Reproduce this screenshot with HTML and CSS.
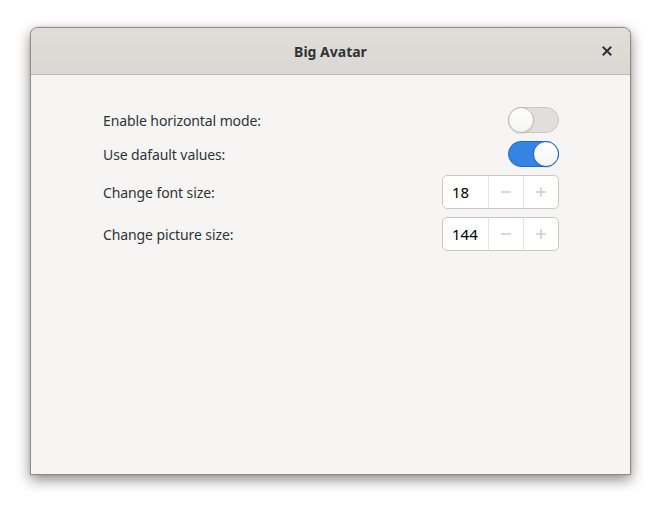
FILE: index.html
```html
<!DOCTYPE html>
<html>
<head>
<meta charset="utf-8">
<link rel="stylesheet" href="styles.css">
</head>
<body>
<div class="window">
  <header class="headerbar">
    <span class="title">Big Avatar</span>
    <button class="close" aria-label="Close">
      <svg width="16" height="16" viewBox="0 0 16 16"><path d="M4.5 4.5 L11.5 11.5 M11.5 4.5 L4.5 11.5" stroke="#2e3436" stroke-width="2" stroke-linecap="square" fill="none"/></svg>
    </button>
  </header>
  <main class="content">
    <div class="grid">
      <div class="label">Enable horizontal mode:</div>
      <div class="ctrl"><div class="switch"><div class="knob"></div></div></div>
      <div class="label">Use dafault values:</div>
      <div class="ctrl"><div class="switch on"><div class="knob"></div></div></div>
      <div class="label">Change font size:</div>
      <div class="ctrl">
        <div class="spin">
          <div class="value">18</div>
          <div class="btn"><svg width="12" height="12" viewBox="0 0 12 12"><path d="M1 6 H11" stroke="currentColor" stroke-width="1.5"/></svg></div>
          <div class="btn"><svg width="12" height="12" viewBox="0 0 12 12"><path d="M1 6 H11 M6 1 V11" stroke="currentColor" stroke-width="1.5"/></svg></div>
        </div>
      </div>
      <div class="label">Change picture size:</div>
      <div class="ctrl">
        <div class="spin">
          <div class="value">144</div>
          <div class="btn"><svg width="12" height="12" viewBox="0 0 12 12"><path d="M1 6 H11" stroke="currentColor" stroke-width="1.5"/></svg></div>
          <div class="btn"><svg width="12" height="12" viewBox="0 0 12 12"><path d="M1 6 H11 M6 1 V11" stroke="currentColor" stroke-width="1.5"/></svg></div>
        </div>
      </div>
    </div>
  </main>
</div>
</body>
</html>
```
FILE: styles.css
```css
html, body {
  margin: 0;
  padding: 0;
  background: #ffffff;
}
body {
  font-family: "Noto Sans", "DejaVu Sans", sans-serif;
  font-size: 14px;
  color: #2e3436;
  padding: 27px 0 0 30px;
  width: 666px;
  height: 513px;
  box-sizing: border-box;
  overflow: hidden;
}
.window {
  width: 601px;
  height: 448px;
  box-sizing: border-box;
  border: 1px solid #8e8d8b;
  border-radius: 8px 8px 0 0;
  background: #f6f5f4;
  box-shadow: 0 5px 14px rgba(0,0,0,0.45), 0 0 2px rgba(0,0,0,0.2);
  display: flex;
  flex-direction: column;
  overflow: hidden;
}
.headerbar {
  height: 46px;
  flex: none;
  background: linear-gradient(#e1deda, #dbd8d4);
  border-bottom: 1px solid #bfb8b1;
  display: flex;
  align-items: center;
  justify-content: center;
  position: relative;
}
.title {
  font-weight: bold;
  font-size: 14px;
  color: #2e3436;
}
.close {
  position: absolute;
  right: 15px;
  top: 15px;
  width: 16px;
  height: 16px;
  padding: 0;
  border: 0;
  background: none;
  display: flex;
}
.content {
  flex: 1;
  padding: 32px 71px 0 72px;
}
.grid {
  display: grid;
  grid-template-columns: 1fr auto;
  row-gap: 8px;
  align-items: center;
  letter-spacing: -0.1px;
}
.label {
  color: #2e3436;
}
.ctrl {
  display: flex;
  justify-content: flex-end;
}
.switch {
  width: 51px;
  height: 26px;
  box-sizing: border-box;
  border-radius: 13px;
  border: 1px solid #cdc7c2;
  background: #e1dedb;
  position: relative;
}
.switch .knob {
  position: absolute;
  left: -1px;
  top: -1px;
  width: 26px;
  height: 26px;
  box-sizing: border-box;
  border-radius: 50%;
  background: linear-gradient(#ffffff, #f6f5f4);
  border: 1px solid #bfb8b1;
  box-shadow: 0 1px 1px rgba(0,0,0,0.1);
}
.switch.on {
  background: #3584e4;
  border-color: #1b6acb;
}
.switch.on .knob {
  left: auto;
  right: -1px;
  border-color: #1b6acb;
}
.spin {
  display: flex;
  height: 34px;
  box-sizing: border-box;
  border: 1px solid #cdc7c2;
  border-radius: 5px;
  background: #ffffff;
  overflow: hidden;
}
.spin .value {
  width: 45px;
  padding-left: 9px;
  box-sizing: border-box;
  display: flex;
  align-items: center;
  color: #000000;
  font-size: 15px;
  letter-spacing: 0;
}
.spin .btn {
  width: 34px;
  border-left: 1px solid #e8e6e3;
  display: flex;
  align-items: center;
  justify-content: center;
  color: #cfccc8;
}
.spin .btn svg {
  display: block;
}
```
